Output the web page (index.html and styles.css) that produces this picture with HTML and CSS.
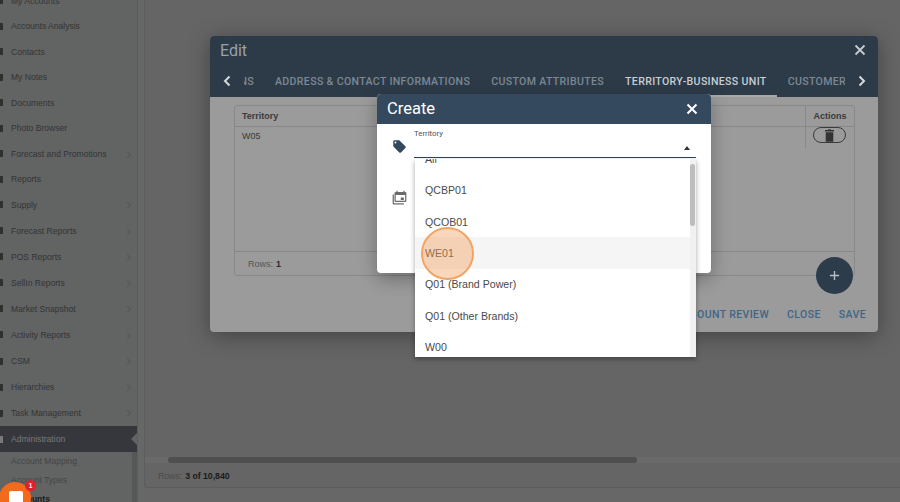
FILE: index.html
```html
<!DOCTYPE html>
<html lang="en">
<head>
<meta charset="utf-8">
<title>Edit territory</title>
<link rel="stylesheet" href="styles.css">
</head>
<body>
<div class="app">
  <aside class="sidebar">
    <nav class="menu">
      <div class="item"><span class="ico"></span><span>My Accounts</span></div>
      <div class="item"><span class="ico"></span><span>Accounts Analysis</span></div>
      <div class="item"><span class="ico"></span><span>Contacts</span></div>
      <div class="item"><span class="ico"></span><span>My Notes</span></div>
      <div class="item"><span class="ico"></span><span>Documents</span></div>
      <div class="item"><span class="ico"></span><span>Photo Browser</span></div>
      <div class="item more"><span class="ico"></span><span>Forecast and Promotions</span></div>
      <div class="item"><span class="ico"></span><span>Reports</span></div>
      <div class="item more"><span class="ico"></span><span>Supply</span></div>
      <div class="item more"><span class="ico"></span><span>Forecast Reports</span></div>
      <div class="item more"><span class="ico"></span><span>POS Reports</span></div>
      <div class="item more"><span class="ico"></span><span>SellIn Reports</span></div>
      <div class="item more"><span class="ico"></span><span>Market Snapshot</span></div>
      <div class="item more"><span class="ico"></span><span>Activity Reports</span></div>
      <div class="item more"><span class="ico"></span><span>CSM</span></div>
      <div class="item more"><span class="ico"></span><span>Hierarchies</span></div>
      <div class="item more"><span class="ico"></span><span>Task Management</span></div>
      <div class="item active"><span class="ico"></span><span>Administration</span></div>
      <div class="sub">
        <div class="subitem">Account Mapping</div>
        <div class="subitem">Account Types</div>
        <div class="subitem current">Accounts</div>
      </div>
    </nav>
  </aside>
  <main class="main">
    <div class="card">
      <div class="hscroll"><div class="hthumb"></div></div>
      <div class="rows-foot">Rows: <b>3 of 10,840</b></div>
    </div>
  </main>
</div>

<section class="edit">
  <header class="edit-head">
    <div class="edit-title"><span>Edit</span>
      <svg class="x" viewBox="0 0 12 12"><path d="M1.500 1.500l9 9M10.500 1.500l-9 9"/></svg>
    </div>
    <div class="tabs">
      <svg class="chev" viewBox="0 0 8 12"><path d="M6.500 1.500L2 6l4.500 4.500"/></svg>
      <div class="tabs-track">
        <span class="tab cut-left">NS</span>
        <span class="tab">ADDRESS &amp; CONTACT INFORMATIONS</span>
        <span class="tab">CUSTOM ATTRIBUTES</span>
        <span class="tab on">TERRITORY-BUSINESS UNIT</span>
        <span class="tab">CUSTOMER</span>
      </div>
      <svg class="chev" viewBox="0 0 8 12"><path d="M1.500 1.500L6 6l-4.500 4.500"/></svg>
    </div>
  </header>
  <div class="edit-body">
    <div class="grid">
      <div class="grow ghead"><div class="c1">Territory</div><div class="c2">Actions</div></div>
      <div class="grow gdata">
        <div class="c1">W05</div>
        <div class="c2"><span class="pill"><svg viewBox="0 0 10 14"><path d="M3.500 0h3v1H10v1.500H0V1h3.500zM.8 3.500h8.400V14H.8z"/></svg></span></div>
      </div>
      <div class="gfoot">Rows: <b>1</b></div>
    </div>
    <button class="fab"><svg viewBox="0 0 12 12"><path d="M6 1v10M1 6h10"/></svg></button>
  </div>
  <footer class="edit-foot">
    <span class="act">ACCOUNT REVIEW</span><span class="act">CLOSE</span><span class="act">SAVE</span>
  </footer>
</section>

<section class="create">
  <header class="create-head"><span>Create</span>
    <svg class="x" viewBox="0 0 12 12"><path d="M1.500 1.500l9 9M10.500 1.500l-9 9"/></svg>
  </header>
  <div class="create-body">
    <div class="field">
      <svg class="fico tag" viewBox="0 0 24 24"><path d="M21.400 11.600l-9-9C12 2.200 11.500 2 11 2H4a2 2 0 0 0-2 2v7c0 .6.200 1.100.600 1.400l9 9c.4.400.9.600 1.400.6s1-.2 1.400-.6l7-7c.4-.4.600-.9.600-1.400s-.2-1-.6-1.400zM5.500 7A1.500 1.500 0 1 1 5.500 4a1.500 1.500 0 0 1 0 3z"/></svg>
      <div class="input">
        <label>Territory</label>
        <i class="caret"></i>
      </div>
    </div>
    <div class="field second">
      <svg class="fico cal" viewBox="0 0 24 24"><path d="M3 7H1v14a2 2 0 0 0 2 2h16v-2H3zM21 3h-1V1h-2v2H9V1H7v2H6a2 2 0 0 0-2 2v12a2 2 0 0 0 2 2h15a2 2 0 0 0 2-2V5a2 2 0 0 0-2-2zm0 14H6V8h15zm-2-5h-5v4h5z"/></svg>
    </div>
  </div>
</section>

<div class="dropdown">
  <div class="opts">
    <div class="opt">All</div>
    <div class="opt">QCBP01</div>
    <div class="opt">QCOB01</div>
    <div class="opt hover">WE01</div>
    <div class="opt">Q01 (Brand Power)</div>
    <div class="opt">Q01 (Other Brands)</div>
    <div class="opt">W00</div>
  </div>
  <div class="vscroll"><div class="vthumb"></div></div>
</div>

<div class="spot"></div>
<div class="launcher"><span class="square"></span><span class="badge">1</span></div>
</body>
</html>
```
FILE: styles.css
```css
* { box-sizing: border-box; }
html, body { margin: 0; height: 100%; overflow: hidden; }
body { font-family: "Liberation Sans", Arial, sans-serif; background: #666666; color: #333; }

.app { display: flex; height: 502px; overflow: hidden; }
.sidebar { width: 137px; flex: none; background: #626363; overflow: hidden; }
.menu { margin-top: -12px; }
.item { height: 25.500px; display: flex; align-items: center; padding-left: 11px; font-size: 8.550px; color: #333535; position: relative; white-space: nowrap; }
.item:nth-child(n+10) { height: 26.100px; }
.ico { position: absolute; left: 0; width: 3px; height: 7px; background: #2f3131; }
.more::after { content: ""; position: absolute; right: 7px; top: 11px; width: 4px; height: 4px; border-top: 1px solid #565858; border-right: 1px solid #565858; transform: rotate(45deg); }
.active { background: #35373c; color: #77797c; }
.active .ico { background: #77797c; }
.active::after { content: ""; position: absolute; right: 0; top: 7px; border: 6px solid transparent; border-right-color: #626363; border-left-width: 0; }
.sub { border-right: 5px solid #565757; height: 80px; margin-top: -1px; }
.subitem { height: 19px; padding-left: 11px; display: flex; align-items: center; font-size: 8.550px; color: #444646; white-space: nowrap; }
.current { color: #1c1d1d; font-weight: 700; }

.main { flex: 1; padding: 0 0 14px 7px; display: flex; background: #676767; box-shadow: inset 1px 0 0 #5c5c5c; }
.card { flex: 1; display: flex; flex-direction: column; justify-content: flex-end; background: #656565; border: 1px solid #5d5d5d; border-top: 0; border-right: 0; border-radius: 0 0 0 3px; }
.hscroll { height: 6px; background: #6a6a6a; padding-left: 23px; }
.hthumb { width: 469px; height: 6px; background: #4f4f4f; border-radius: 3px; }
.rows-foot { height: 24px; padding-left: 13px; padding-top: 1px; display: flex; align-items: center; gap: 3px; font-size: 8.700px; color: #4b4b4b; }
.rows-foot b { color: #1a1a1a; }

.edit { position: absolute; left: 210px; top: 36px; width: 668px; height: 296px; background: #9b9b9b; border-radius: 4px; box-shadow: 0 4px 22px rgba(0,0,0,.35); display: flex; flex-direction: column; overflow: hidden; }
.edit-head { background: #2d3b49; height: 61px; flex: none; }
.edit-title { height: 28px; display: flex; align-items: center; justify-content: space-between; padding: 0 12px 0 10px; font: 400 16px "Roboto", sans-serif; color: #98a2ab; }
.x { width: 12px; height: 12px; fill: none; stroke: #c6cbd0; stroke-width: 1.800; }
.tabs { display: flex; align-items: center; height: 32px; margin-top: 1px; padding: 0 12px 0 13px; }
.chev { width: 8px; height: 12px; fill: none; stroke: #d5d8dc; stroke-width: 2; flex: none; }
.tabs-track { flex: 1; display: flex; overflow: hidden; height: 32px; font: 500 10.600px "Roboto", sans-serif; letter-spacing: .33px; margin: 0 13px 0 13px; }
.tab { flex: none; display: flex; align-items: center; padding: 0 10.500px; color: #7b8894; white-space: nowrap; height: 32px; }
.tab.cut-left { width: 20.500px; padding: 0 10.500px 0 0; justify-content: flex-end; overflow: hidden; }
.tab.on { color: #c9ced2; box-shadow: inset 0 -2px 0 #a8a8a8; }
.edit-body { flex: 1; padding: 9px 23px 0 24px; position: relative; }
.grid { height: 171px; margin-top: -1px; border: 1px solid #888; border-radius: 3px; display: flex; flex-direction: column; font-size: 9px; color: #3a3a3a; }
.grow { display: flex; }
.ghead { height: 21px; border-bottom: 1px solid #888; font-weight: 700; align-items: center; }
.gdata { flex: 1; font-size: 9px; }
.c1 { flex: 1; padding-left: 7px; }
.gdata .c1 { padding-top: 4px; }
.c2 { width: 49px; border-left: 1px solid #888; text-align: center; }
.ghead .c2 { height: 100%; display: flex; align-items: center; justify-content: center; }
.gdata .c2 { height: 21px; }
.pill { display: flex; align-items: center; justify-content: center; width: 33px; height: 16px; margin: 0 auto 0 7px; border: 1px solid #3a3a3a; border-radius: 8px; }
.pill svg { width: 9px; height: 13px; fill: #333; }
.gfoot { height: 24px; border-top: 1px solid #888; padding-left: 13px; display: flex; align-items: center; gap: 3px; color: #555; }
.gfoot b { color: #2b2b2b; }
.fab { position: absolute; right: 25px; top: 160px; width: 37px; height: 37px; border-radius: 50%; background: #2d3c4b; border: 0; padding: 0; display: flex; align-items: center; justify-content: center; }
.fab svg { width: 11px; height: 11px; fill: none; stroke: #b9bec3; stroke-width: 1.500; }
.edit-foot { height: 35px; flex: none; display: flex; justify-content: flex-end; align-items: center; gap: 18px; padding: 0 12px 0 0; font: 500 10.500px "Roboto", sans-serif; letter-spacing: .4px; color: #3f6587; }

.create { position: absolute; left: 377px; top: 94px; width: 334px; height: 179px; background: #fff; border-radius: 4px; overflow: hidden; box-shadow: 0 6px 18px rgba(0,0,0,.3); }
.create-head { height: 30px; background: #34495e; display: flex; align-items: center; justify-content: space-between; padding: 0 13px 0 10px; font: 400 16.500px "Roboto", sans-serif; color: #fff; }
.create-head span { margin-top: -2px; }
.create-head .x { stroke: #fff; stroke-width: 2; }
.create-body { padding: 0 15px; }
.field { display: flex; align-items: flex-start; gap: 7px; }
.fico { width: 15px; height: 15px; flex: none; margin-top: 15px; }
.tag { fill: #34495e; }
.cal { fill: #6b6b6b; margin-top: 0; }
.input { flex: 1; height: 34px; border-bottom: 1.500px solid #2f4356; position: relative; }
.input label { position: absolute; left: 0; top: 5px; font: 400 7.800px "Roboto", sans-serif; color: #4a5560; }
.caret { position: absolute; right: 6px; top: 22px; border: 3.500px solid transparent; border-top: 0; border-bottom: 4px solid #333; }
.second { margin-top: 23px; padding-top: 9px; }

.dropdown { position: absolute; left: 415px; top: 159px; width: 281px; height: 198px; background: #fff; box-shadow: 0 2px 5px rgba(0,0,0,.35); display: flex; overflow: hidden; }
.opts { flex: 1; margin-top: -15.700px; }
.opt { height: 31.350px; padding-left: 10px; display: flex; align-items: center; font: 400 10.600px "Liberation Sans", Arial, sans-serif; color: #4a4a4a; }
.hover { background: #f5f5f5; }
.vscroll { width: 6px; background: #f1f1f1; padding-top: 5px; }
.vthumb { width: 5px; height: 62px; background: #bdbdbd; border-radius: 3px; }

.spot { position: absolute; left: 421px; top: 227px; width: 53px; height: 53px; border-radius: 50%; background: rgba(244,160,90,.42); border: 2px solid #f2a465; }
.launcher { position: absolute; left: -1px; top: 482px; width: 32px; height: 32px; border-radius: 50%; background: #f26a1c; }
.square { position: absolute; left: 10px; top: 9px; width: 14px; height: 22px; background: #fff; border-radius: 2px; }
.badge { position: absolute; left: 26px; top: -2px; width: 11px; height: 11px; border-radius: 50%; background: #e3202a; color: #fff; font-size: 6.500px; font-weight: 700; display: flex; align-items: center; justify-content: center; }
```
